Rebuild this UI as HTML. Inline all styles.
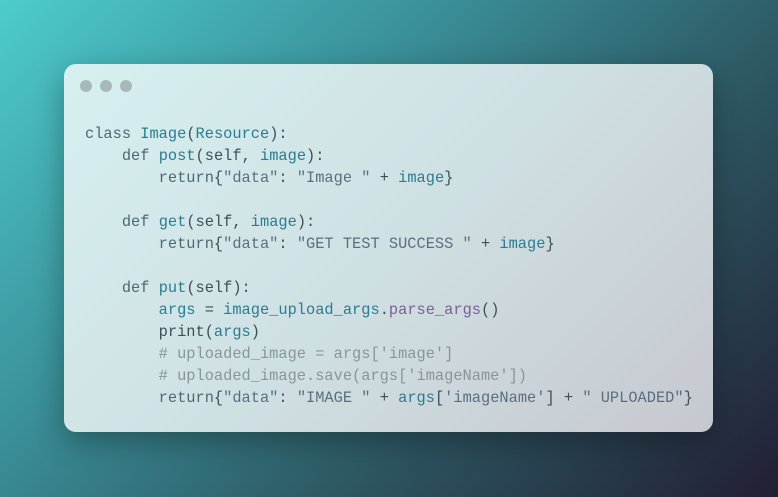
<!DOCTYPE html>
<html><head><style>
html,body{margin:0;padding:0}
body{width:778px;height:497px;overflow:hidden;background:linear-gradient(135deg,#4dcccc 0%,#3a8f98 35%,#2d5863 65%,#221f34 100%);position:relative;font-family:"Liberation Mono",monospace}
.card{position:absolute;left:64px;top:64px;width:649px;height:368px;border-radius:12px;background:linear-gradient(135deg,#d6f0f0 0%,#cfe0e3 50%,#c6c8cf 100%);box-shadow:0 10px 30px rgba(0,0,0,.3)}
.dot{position:absolute;top:16px;width:12px;height:12px;border-radius:50%;background:#a8b8b9}
pre{position:absolute;left:21px;top:59px;margin:0;font-family:"Liberation Mono",monospace;font-size:15.35px;line-height:22px;color:#3d4f55}
.k{color:#4e6870}.b{color:#2b7c90}.s{color:#5a6e80}.c{color:#8a9597}.p{color:#7a5f98}
</style></head><body>
<div class="card">
<div class="dot" style="left:16px"></div><div class="dot" style="left:36px"></div><div class="dot" style="left:56px"></div>
<pre><span class="k">class</span> <span class="b">Image</span>(<span class="b">Resource</span>):
    <span class="k">def</span> <span class="b">post</span>(self, <span class="b">image</span>):
        <span class="k">return</span>{<span class="s">"data"</span>: <span class="s">"Image "</span> + <span class="b">image</span>}

    <span class="k">def</span> <span class="b">get</span>(self, <span class="b">image</span>):
        <span class="k">return</span>{<span class="s">"data"</span>: <span class="s">"GET TEST SUCCESS "</span> + <span class="b">image</span>}

    <span class="k">def</span> <span class="b">put</span>(self):
        <span class="b">args</span> = <span class="b">image_upload_args</span>.<span class="p">parse_args</span>()
        print(<span class="b">args</span>)
        <span class="c"># uploaded_image = args['image']</span>
        <span class="c"># uploaded_image.save(args['imageName'])</span>
        <span class="k">return</span>{<span class="s">"data"</span>: <span class="s">"IMAGE "</span> + <span class="b">args</span>[<span class="s">'imageName'</span>] + <span class="s">" UPLOADED"</span>}</pre>
</div>
</body></html>
